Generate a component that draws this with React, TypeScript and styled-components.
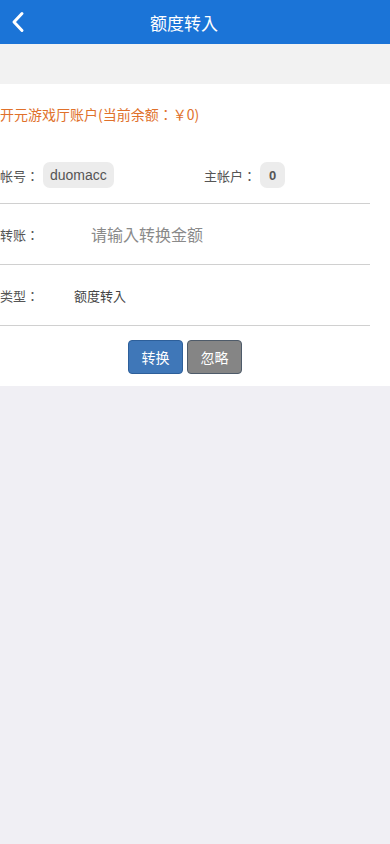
import React, { useState } from 'react';
import styled, { createGlobalStyle } from 'styled-components';

const GlobalStyle = createGlobalStyle`
  html, body {
    margin: 0;
    padding: 0;
    background: #f0eff4;
    font-family: "Noto Sans CJK TC", "Liberation Sans", sans-serif;
  }
  * {
    box-sizing: border-box;
  }
`;

const Page = styled.div`
  min-height: 844px;
  background: #f0eff4;
`;

const Header = styled.header`
  height: 44px;
  background: #1b74d7;
  display: grid;
  grid-template-columns: 44px 1fr 66px;
  align-items: center;
  color: #fff;
`;

const BackBtn = styled.button`
  border: 0;
  background: none;
  padding: 0 0 0 11px;
  height: 44px;
  display: flex;
  align-items: center;
  cursor: pointer;
`;

const Title = styled.h1`
  margin: 0;
  text-align: center;
  font-size: 17px;
  font-weight: normal;
`;

const Gap = styled.div`
  height: 40px;
  background: #f2f2f2;
`;

const Card = styled.section`
  background: #fff;
`;

const Notice = styled.div`
  height: 59px;
  display: flex;
  align-items: center;
  font-size: 14px;
  color: #e0712b;
`;

const Row = styled.div`
  width: 370px;
  height: 61px;
  display: flex;
  align-items: center;
  border-bottom: 1px solid #d0d0d0;
  font-size: 13px;
  color: #555;
`;

const AccountRow = styled(Row)`
  display: grid;
  grid-template-columns: 204px 1fr;
  padding-top: 4px;
`;

const Field = styled.div`
  display: flex;
  align-items: center;
`;

const Label = styled.span<{ $width?: number }>`
  display: inline-block;
  width: ${p => (p.$width ? `${p.$width}px` : 'auto')};
  font-size: 13px;
  color: #555;
  margin-right: 4px;
`;

const Pill = styled.span<{ $bold?: boolean }>`
  display: inline-flex;
  align-items: center;
  height: 26px;
  padding: 0 ${p => (p.$bold ? '9px' : '7px')};
  border-radius: 7px;
  background: #ececec;
  color: #555;
  font-family: "Liberation Sans", sans-serif;
  font-size: ${p => (p.$bold ? '13px' : '14px')};
  font-weight: ${p => (p.$bold ? 'bold' : 'normal')};
`;

const AmountInput = styled.input`
  flex: 1;
  border: 0;
  outline: none;
  padding: 0 0 0 16px;
  font-size: 16px;
  font-family: inherit;
  color: #333;
  background: transparent;
  &::placeholder {
    color: #8a8a8a;
  }
`;

const Value = styled.span`
  font-size: 13px;
  color: #444;
`;

const Actions = styled.div`
  width: 370px;
  display: flex;
  justify-content: center;
  gap: 4px;
  padding: 14px 0 12px;
`;

const Button = styled.button<{ $tone: 'primary' | 'muted' }>`
  width: 55px;
  height: 34px;
  border-radius: 4px;
  border: 1px solid ${p => (p.$tone === 'primary' ? '#2d5f9a' : '#4e5b6a')};
  background: ${p => (p.$tone === 'primary' ? '#3f77b8' : '#858585')};
  color: #fff;
  font-size: 14px;
  font-family: inherit;
  cursor: pointer;
`;

const ChevronLeft = () => (
  <svg width="14" height="22" viewBox="0 0 14 22" fill="none">
    <path d="M11 2.5 L3 11 L11 19.5" stroke="#fff" strokeWidth="3" strokeLinecap="round" strokeLinejoin="round" />
  </svg>
);

export default function App() {
  const [amount, setAmount] = useState('');

  return (
    <Page>
      <GlobalStyle />
      <Header>
        <BackBtn aria-label="返回">
          <ChevronLeft />
        </BackBtn>
        <Title>额度转入</Title>
        <span />
      </Header>
      <Gap />
      <Card>
        <Notice>开元游戏厅账户(当前余额：￥0)</Notice>
        <AccountRow>
          <Field>
            <Label>帐号：</Label>
            <Pill>duomacc</Pill>
          </Field>
          <Field>
            <Label>主帐户：</Label>
            <Pill $bold>0</Pill>
          </Field>
        </AccountRow>
        <Row>
          <Label $width={71}>转账：</Label>
          <AmountInput
            value={amount}
            onChange={e => setAmount(e.target.value)}
            placeholder="请输入转换金额"
          />
        </Row>
        <Row>
          <Label $width={70}>类型：</Label>
          <Value>额度转入</Value>
        </Row>
        <Actions>
          <Button $tone="primary">转换</Button>
          <Button $tone="muted">忽略</Button>
        </Actions>
      </Card>
    </Page>
  );
}
